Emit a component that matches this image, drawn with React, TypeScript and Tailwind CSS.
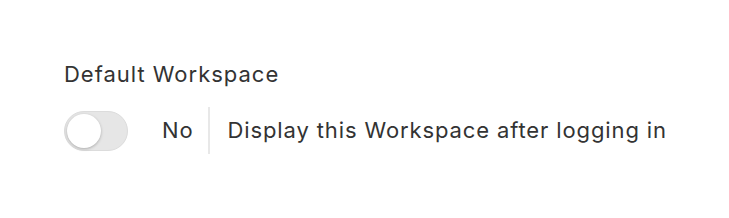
import React from "react";

export default function App() {
  return (
    <div className="w-[729px] h-[218px] bg-white pl-[64px] pt-[60px]" style={{ fontFamily: "Inter, sans-serif" }}>
      <div className="text-[22px] leading-[28px] tracking-[0.045em] text-[#333333]">Default Workspace</div>
      <div className="flex items-center mt-[19px] h-[47px]">
        <button className="relative w-[64px] h-[40px] rounded-full bg-[#e6e6e6] border border-[#dcdcdc] shrink-0">
          <span className="absolute left-[2px] top-[2px] w-[34px] h-[34px] rounded-full bg-white shadow-[0_1px_3px_rgba(0,0,0,0.25)]" />
        </button>
        <span className="ml-[34px] text-[22px] tracking-[0.04em] text-[#333333]">No</span>
        <div className="ml-[14px] w-[2px] h-[47px] bg-[#e8e8e8]" />
        <span className="ml-[18px] text-[22px] tracking-[0.04em] text-[#333333]">Display this Workspace after logging in</span>
      </div>
    </div>
  );
}
